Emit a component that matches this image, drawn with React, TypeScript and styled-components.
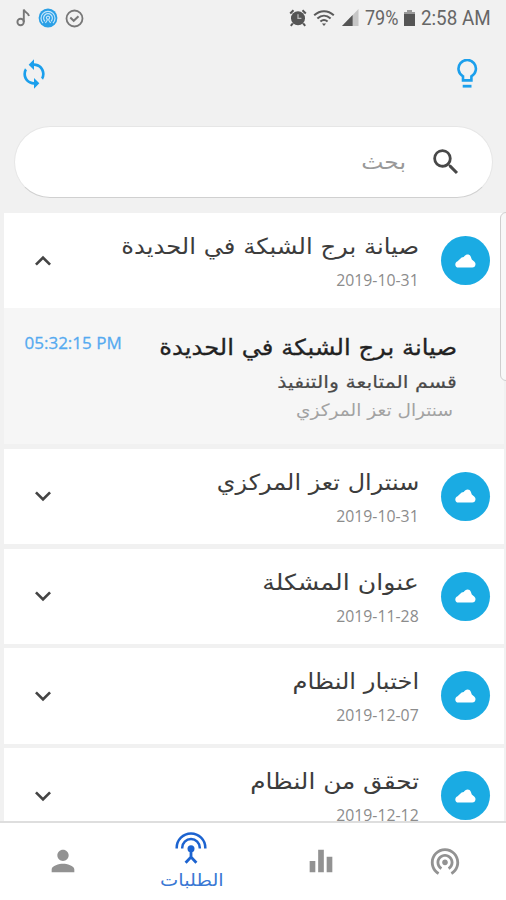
import React from 'react';
import styled, { createGlobalStyle } from 'styled-components';
import { MdSync, MdSearch, MdExpandMore, MdExpandLess, MdPerson, MdEqualizer, MdWifiTethering } from 'react-icons/md';

const GlobalStyle = createGlobalStyle`
  * { box-sizing: border-box; }
  body { margin: 0; background: #f1f1f1; overflow: hidden; }
  svg { display: block; flex: none; }
`;

const Screen = styled.div`
  position: relative;
  width: 506px;
  height: 900px;
  display: flex;
  flex-direction: column;
  overflow: hidden;
  background: #f1f1f1;
  font-family: 'Open Sans', 'DejaVu Sans', sans-serif;
`;

const StatusBar = styled.header`
  height: 36px;
  padding: 0 15px 0 15px;
  display: flex;
  justify-content: space-between;
  align-items: center;
  color: #666;
`;

const StatusGroup = styled.div<{ $gap: number }>`
  display: flex;
  align-items: center;
  gap: ${(p) => p.$gap}px;
`;

const StatusText = styled.span<{ $width: number; $scale: number }>`
  width: ${(p) => p.$width}px;
  font: 400 20px/24px Roboto, sans-serif;
  white-space: nowrap;
  transform: scaleX(${(p) => p.$scale});
  transform-origin: left;
`;

const Toolbar = styled.div`
  height: 76px;
  padding: 0 28px 0 18px;
  display: flex;
  justify-content: space-between;
  align-items: center;
  color: #1b9fec;
`;

const SearchBox = styled.div`
  direction: rtl;
  height: 72px;
  margin: 14px 13px 15px 14px;
  padding-right: 29px;
  display: flex;
  align-items: center;
  gap: 23px;
  flex: none;
  border-radius: 36px;
  border: 1px solid #e6e6e6;
  border-bottom-color: #d0d0d0;
  background: #fff;
  color: #484848;
`;

const Text = styled.span<{ $size: number; $line: number; $color: string; $scale?: number; $stroke?: number }>`
  display: block;
  font-family: 'DejaVu Sans', sans-serif;
  font-size: ${(p) => p.$size}px;
  line-height: ${(p) => p.$line}px;
  height: ${(p) => p.$line}px;
  color: ${(p) => p.$color};
  -webkit-text-stroke: ${(p) => p.$stroke ?? 0}px ${(p) => p.$color};
  white-space: nowrap;
  transform: scaleX(${(p) => p.$scale ?? 1});
  transform-origin: right;
`;

const LatinText = styled(Text)`
  font-family: 'Open Sans', sans-serif;
`;

const List = styled.main`
  direction: rtl;
  flex: 1;
  min-height: 0;
  overflow: hidden;
  padding: 0 2px 0 3.5px;
  display: flex;
  flex-direction: column;
`;

const Row = styled.section<{ $open?: boolean }>`
  flex: none;
  height: 95.2px;
  margin-bottom: ${(p) => (p.$open ? 0 : 4.6)}px;
  padding: 0 14px 0 23px;
  display: flex;
  align-items: center;
  background: #fff;
  color: #444;
`;

const Avatar = styled.div`
  width: 49px;
  height: 49px;
  border-radius: 50%;
  background: #1aabe3;
  display: grid;
  place-items: center;
  flex: none;
`;

const RowText = styled.div`
  flex: 1;
  height: 100%;
  padding: 17px 22px 0 0;
  display: flex;
  flex-direction: column;
  align-items: flex-start;
`;

const Details = styled.section`
  flex: none;
  height: 136px;
  margin-bottom: 4.6px;
  padding: 22px 47px 0 21px;
  display: flex;
  justify-content: space-between;
  background: #f6f6f6;
`;

const DetailLines = styled.div`
  display: flex;
  flex-direction: column;
  align-items: flex-start;
`;

const Indented = styled.div`
  padding-right: 4px;
`;

const Time = styled(LatinText)`
  direction: ltr;
  width: 98px;
  transform-origin: left;
`;

const EdgeHandle = styled.div`
  position: absolute;
  left: 500px;
  top: 212px;
  width: 12px;
  height: 169px;
  border: 1px solid #cfcfcf;
  border-radius: 6px;
  background: #f8f8f8;
`;

const Nav = styled.nav`
  height: 79px;
  flex: none;
  padding-bottom: 1px;
  border-top: 2px solid #dedede;
  background: #fff;
  display: grid;
  grid-template-columns: 125px 133px 126px 122px;
  align-items: center;
  justify-items: center;
`;

const NavItem = styled.div<{ $active?: boolean }>`
  display: flex;
  flex-direction: column;
  align-items: center;
  gap: 2px;
  padding-top: ${(p) => (p.$active ? 4 : 0)}px;
  color: ${(p) => (p.$active ? '#1c63d0' : '#929292')};
`;

const NavLabel = styled(Text)`
  transform-origin: center;
`;

const NoteIcon = () => (
  <svg width="16" height="20" viewBox="0 0 16 20" fill="none" stroke="#777" strokeWidth="1.9">
    <circle cx="5.6" cy="14" r="3.2" />
    <path d="M8.8 14V1.5C9.2 4.5 13 4 14 8" />
  </svg>
);

const PodIcon = () => (
  <svg width="20" height="20" viewBox="0 0 20 20" fill="none">
    <circle cx="10" cy="10" r="9.4" fill="#2ba0e6" />
    <g stroke="#c4e6fb" strokeWidth="1.2">
      <path d="M5 15.2a7 7 0 1 1 10 0" />
      <path d="M6.9 13.2a4.4 4.4 0 1 1 6.2 0" />
      <circle cx="10" cy="9.8" r="1.6" />
      <path d="M9.4 12 7.4 15M10.6 12l2 3" />
    </g>
  </svg>
);

const CheckIcon = () => (
  <svg width="19" height="19" viewBox="0 0 19 19" fill="none" stroke="#777" strokeWidth="1.8">
    <circle cx="9.5" cy="9.5" r="8" />
    <path d="m5.3 8.6 3.4 3.2 4.8-4.6" strokeWidth="2" />
  </svg>
);

const AlarmIcon = () => (
  <svg width="18" height="18" viewBox="0 0 18 18" fill="none" stroke="#555">
    <circle cx="9" cy="9.2" r="7" fill="#555" stroke="none" />
    <path d="M1.2 4.5 4.5 1.3M16.8 4.5 13.5 1.3M3.8 14.4 1.8 16.8M14.2 14.4l2 2.4" strokeWidth="2" />
    <path d="M9 5.2v4.2h3.4" stroke="#bbb" strokeWidth="1.3" />
  </svg>
);

const WifiIcon = () => (
  <svg width="22" height="18" viewBox="0 0 22 18" fill="none" stroke="#5a5a5a" strokeWidth="2">
    <path d="M1.2 6.2C7 .8 15 .8 20.8 6.2M4.4 9.5c4-3.6 9.2-3.6 13.2 0M7.4 12.6c2.2-1.9 5-1.9 7.2 0" />
    <path d="M8.9 14.4h4.2L11 17z" fill="#5a5a5a" stroke="none" />
  </svg>
);

const SignalIcon = () => (
  <svg width="17" height="18" viewBox="0 0 17 18">
    <path d="M0 17 16.5 0v17z" fill="#c6c6c6" />
    <path d="M0 17 10.6 6v11z" fill="#555" />
  </svg>
);

const BatteryIcon = () => (
  <svg width="11" height="18" viewBox="0 0 11 18">
    <path d="M3 1h5v2h3v3H0V3h3z" fill="#999" />
    <path d="M0 5h11v12H0z" fill="#555" />
  </svg>
);

const BulbIcon = () => (
  <svg width="22" height="30" viewBox="0 0 22 30" fill="none" stroke="#1b9fec" strokeWidth="2.6">
    <path d="M7 21.4V17.3A8.7 8.7 0 1 1 15.4 17.3v4.1z" />
    <path d="M6.7 27.2h8.8" strokeWidth="2.8" />
  </svg>
);

const CloudIcon = () => (
  <svg width="21" height="14" viewBox="0 0 21 14" fill="#fff">
    <path d="M3.4 13.6C1.5 13.6.3 12.2.3 10.4c0-1.4.9-2.6 2.3-3.2L6.6 3.6l2.1-.5C9.700 1.400 11 .4 12.600.4c1.600 0 2.600.9 3.200 2.300l1 2.900 2.400 1.800c.9.8 1.300 1.800 1.300 2.900 0 2-1.400 3.300-3.200 3.300z" />
  </svg>
);

const TowerIcon = () => (
  <svg width="32" height="32" viewBox="0 0 32 32" fill="none" stroke="currentColor" strokeWidth="2.5">
    <path d="M1.7 16.6v-.9a14.3 14.3 0 0 1 28.6 0v.9" />
    <path d="M7.2 16.6v-.8a8.8 8.8 0 0 1 17.6 0v.8" />
    <circle cx="16" cy="16.8" r="3.5" fill="currentColor" stroke="none" />
    <path d="M16 18v7.5M10.6 30.8 16 25l5.4 5.8" strokeWidth="2.8" />
  </svg>
);

type Request = { title: string; date: string; scale: number; open?: boolean };

const requests: Request[] = [
  { title: 'صيانة برج الشبكة في الحديدة', date: '2019-10-31', scale: 1.103, open: true },
  { title: 'سنترال تعز المركزي', date: '2019-10-31', scale: 1.087 },
  { title: 'عنوان المشكلة', date: '2019-11-28', scale: 1.145 },
  { title: 'اختبار النظام', date: '2019-12-07', scale: 1.1 },
  { title: 'تحقق من النظام', date: '2019-12-12', scale: 1.125 },
];

const RequestRow = ({ title, date, scale, open }: Request) => (
  <Row $open={open}>
    <Avatar><CloudIcon /></Avatar>
    <RowText>
      <Text $size={22} $line={34} $color="#3c3c3c" $scale={scale}>{title}</Text>
      <LatinText $size={17} $line={32} $color="#8c8c8c" $scale={0.93}>{date}</LatinText>
    </RowText>
    {open ? <MdExpandLess size={32} /> : <MdExpandMore size={32} />}
  </Row>
);

export default function App() {
  return (
    <Screen>
      <GlobalStyle />
      <StatusBar>
        <StatusGroup $gap={7}>
          <NoteIcon />
          <PodIcon />
          <CheckIcon />
        </StatusGroup>
        <StatusGroup $gap={6.5}>
          <AlarmIcon />
          <WifiIcon />
          <SignalIcon />
          <StatusText $width={32} $scale={0.9}>79%</StatusText>
          <BatteryIcon />
          <StatusText $width={70} $scale={0.94}>2:58 AM</StatusText>
        </StatusGroup>
      </StatusBar>
      <Toolbar>
        <MdSync size={32} />
        <BulbIcon />
      </Toolbar>
      <SearchBox>
        <MdSearch size={34} />
        <Text $size={21} $line={34} $color="#999" $scale={1.12}>بحث</Text>
      </SearchBox>
      <List>
        <RequestRow {...requests[0]} />
        <Details>
          <DetailLines>
            <Text $size={22} $line={35} $color="#222" $scale={1.103} $stroke={0.3}>صيانة برج الشبكة في الحديدة</Text>
            <Text $size={17.5} $line={34} $color="#4a4a4a" $scale={1.175} $stroke={0.2}>قسم المتابعة والتنفيذ</Text>
            <Indented>
              <Text $size={17} $line={23} $color="#a2a2a2" $scale={1.09}>سنترال تعز المركزي</Text>
            </Indented>
          </DetailLines>
          <Time $size={17} $line={25} $color="#55aaf0" $scale={1} $stroke={0.3}>05:32:15 PM</Time>
        </Details>
        {requests.slice(1).map((r) => (
          <RequestRow key={r.title} {...r} />
        ))}
      </List>
      <Nav>
        <NavItem><MdPerson size={34} /></NavItem>
        <NavItem $active>
          <TowerIcon />
          <NavLabel $size={17} $line={28} $color="#3a78d4" $scale={1.14}>الطلبات</NavLabel>
        </NavItem>
        <NavItem><MdEqualizer size={34} /></NavItem>
        <NavItem><MdWifiTethering size={34} /></NavItem>
      </Nav>
      <EdgeHandle />
    </Screen>
  );
}
